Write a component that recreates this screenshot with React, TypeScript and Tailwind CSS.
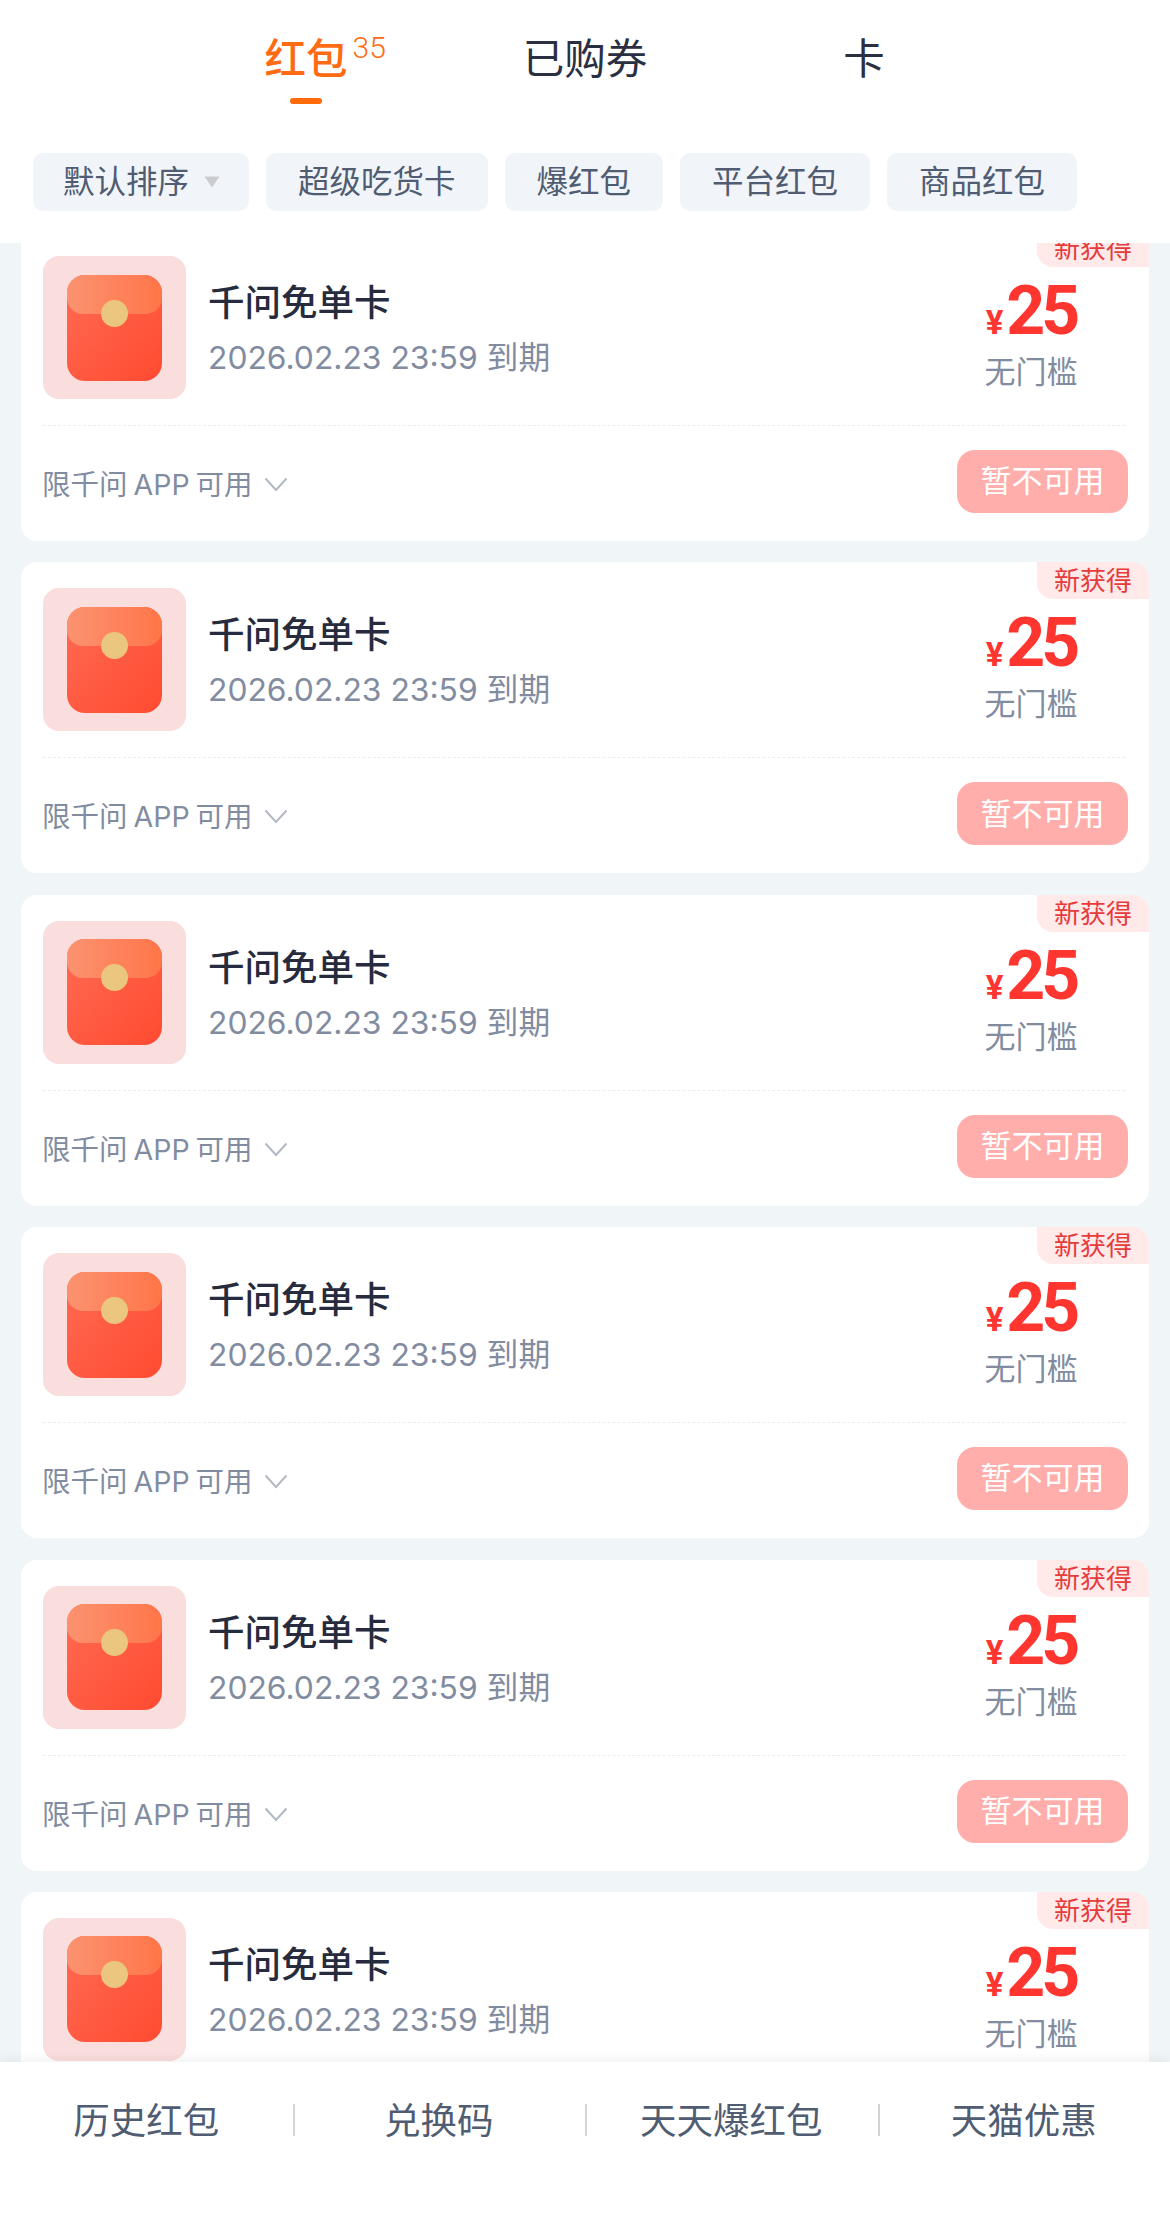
const FONT = "font-['Inter','Noto_Sans_CJK_SC',sans-serif]";

const tabs = [
  { label: "红包", count: "35", active: true },
  { label: "已购券" },
  { label: "卡" },
];

const chips = ["超级吃货卡", "爆红包", "平台红包", "商品红包"];
const footerLinks = ["历史红包", "兑换码", "天天爆红包", "天猫优惠"];

function RedPacketIcon() {
  return (
    <div className="flex h-[143px] w-[143px] shrink-0 items-center justify-center rounded-[16px] bg-[#FADDDD]">
      <div className="relative h-[106px] w-[95px] overflow-hidden rounded-[18px] bg-linear-to-br from-[#FF6A52] to-[#FF4A30]">
        <div className="h-[39px] rounded-b-[16px] bg-linear-to-r from-[#FB9270] to-[#FF7548]" />
        <div className="absolute left-[34px] top-[25px] h-[27px] w-[27px] rounded-full bg-[#EBC67F]" />
      </div>
    </div>
  );
}

function CouponCard() {
  return (
    <div className="relative h-[311px] shrink-0 overflow-hidden rounded-[16px] bg-white">
      <div className="absolute right-0 top-0 flex h-[37px] w-[112px] items-center justify-center rounded-bl-[16px] bg-[#FFE9E9] text-[26px] text-[#E63B3B]">
        新获得
      </div>
      <div className="ml-[22px] mr-[24px] flex h-[196px] border-b border-dashed border-[#E9EDF1] pt-[26px]">
        <RedPacketIcon />
        <div className="ml-[22px] flex-1 pt-[22px]">
          <div className="text-[36.5px] leading-[50px] font-medium text-[#262B3D]">千问免单卡</div>
          <div className="mt-[5px] text-[31.8px] leading-[50px] text-[#828CA0]">2026.02.23 23:59 到期</div>
        </div>
        <div className="mr-[48px] flex w-[92px] flex-col items-center">
          <div className="mt-[20px] flex h-[70px] items-baseline whitespace-nowrap font-['Roboto',sans-serif] font-bold text-[#FF3530]">
            <span className="text-[33px] leading-[70px]">¥</span>
            <span className="ml-[3px] text-[68px] leading-[70px] tracking-[-4px]">25</span>
          </div>
          <div className="mt-[4px] text-[31px] leading-[44px] whitespace-nowrap text-[#828CA0]">无门槛</div>
        </div>
      </div>
      <div className="flex items-center pl-[21px] pr-[21px] pt-[24px]">
        <div className="flex items-center pt-[6px]">
          <span className="text-[28.5px] leading-[57px] text-[#828CA0] [word-spacing:-2px]">限千问 APP 可用</span>
          <svg className="ml-[11px]" width="24" height="15" viewBox="0 0 24 15" fill="none">
            <path d="M1.5 1.5L12 13L22.5 1.5" stroke="#B2B9C5" strokeWidth="2" />
          </svg>
        </div>
        <div className="ml-auto flex h-[63px] w-[171px] items-center justify-center rounded-[18px] bg-[#FFAEAC] text-[31px] text-white">
          暂不可用
        </div>
      </div>
    </div>
  );
}

export default function App() {
  return (
    <div className={`flex h-[2216px] w-[1170px] flex-col overflow-hidden bg-[#F0F5F8] ${FONT}`}>
      <header className="relative z-10 h-[243px] shrink-0 bg-white">
        <div className="flex justify-center pt-[32px]">
          {tabs.map((tab) => (
            <div key={tab.label} className="flex w-[279px] flex-col items-center">
              <div
                className={`relative text-[41.5px] leading-[54px] ${tab.active ? "text-[#FF6B12] font-medium" : "text-[#2A2F42]"}`}
              >
                {tab.label}
                {tab.count && (
                  <span className="absolute left-[88px] top-[-2px] font-['Roboto',sans-serif] text-[30px] leading-[36px] font-light">
                    {tab.count}
                  </span>
                )}
              </div>
              {tab.active && <div className="mt-[12px] h-[6px] w-[32px] rounded-full bg-[#FF6A0A]" />}
            </div>
          ))}
        </div>
        <div className="absolute left-[33px] top-[153px] flex gap-[17px] text-[31.5px] text-[#505C72]">
          <div className="flex h-[58px] w-[216px] items-center rounded-[10px] bg-[#F1F5F9] pl-[30px]">
            默认排序
            <svg className="ml-[15px]" width="16" height="12" viewBox="0 0 16 12">
              <path d="M0.5 0.5H15.5L8 11.5Z" fill="#C9CBCE" />
            </svg>
          </div>
          {chips.map((chip) => (
            <div key={chip} className="flex h-[58px] items-center rounded-[10px] bg-[#F1F5F9] px-[32px]">
              {chip}
            </div>
          ))}
        </div>
      </header>

      <main className="min-h-0 flex-1 overflow-hidden px-[21px]">
        <div className="mt-[-13px] flex flex-col gap-[21.4px]">
          {[0, 1, 2, 3, 4, 5].map((i) => (
            <CouponCard key={i} />
          ))}
        </div>
      </main>

      <footer className="relative z-10 flex h-[154px] shrink-0 bg-white pt-[43px] shadow-[0_-4px_10px_rgba(0,0,0,0.05)]">
        {footerLinks.map((link, i) => (
          <div key={link} className="relative h-[32px] w-[293px]">
            <div className="flex h-full items-center justify-center whitespace-nowrap text-[36.5px] text-[#505C72]">
              {link}
            </div>
            {i < 3 && <div className="absolute right-[-2px] top-[-1px] h-[32px] w-[2px] bg-[#D0D3D8]" />}
          </div>
        ))}
      </footer>
    </div>
  );
}
